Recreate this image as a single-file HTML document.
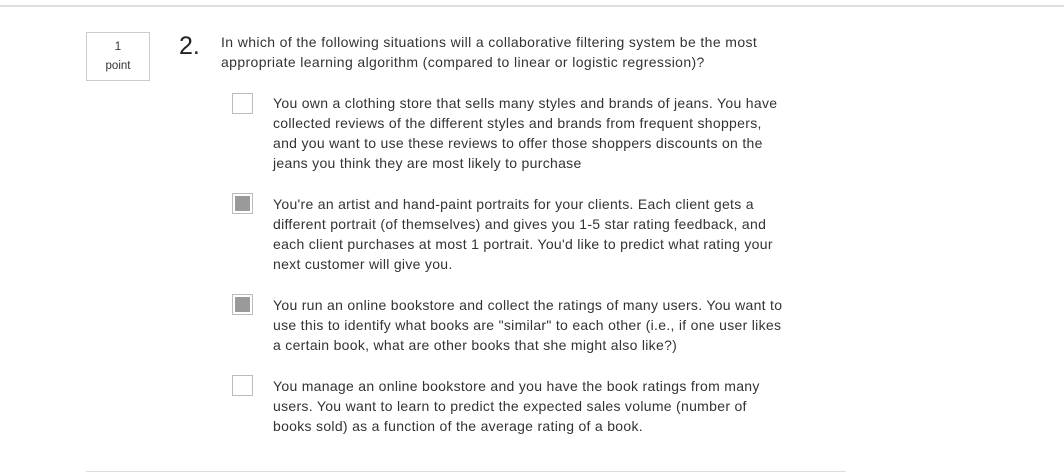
<!DOCTYPE html><html><head><style>
body{margin:0;width:1064px;height:474px;background:#fff;font-family:"Liberation Sans",sans-serif;color:#333;position:relative;overflow:hidden}
.top{position:absolute;left:0;top:5px;width:1064px;height:2px;background:#e0e0e0}
.bot{position:absolute;left:86px;top:471px;width:760px;height:1px;background:#ddd}
.pt{position:absolute;left:86px;top:32px;width:64px;height:49px;border:1px solid #ccc;font-size:11.5px;text-align:center;line-height:19px;box-sizing:border-box;padding-top:5px;color:#333}
.num{position:absolute;left:179px;top:32px;font-size:25px;color:#222}
.q{position:absolute;left:221px;top:32px;font-size:14px;line-height:20px;color:#333;white-space:nowrap;letter-spacing:0.38px}
.cb{position:absolute;left:232px;width:21px;height:21px;border:1px solid #bbb;background:#fff;box-sizing:border-box}
.cb.on::after{content:"";position:absolute;left:2px;top:2px;width:15px;height:15px;background:#9a9a9a}
.o{position:absolute;left:273px;font-size:14px;line-height:20px;color:#333;white-space:nowrap;letter-spacing:0.3px}
</style></head><body>
<div class="top"></div>
<div class="pt">1<br>point</div>
<div class="num">2.</div>
<div class="q">In which of the following situations will a collaborative filtering system be the most<br>appropriate learning algorithm (compared to linear or logistic regression)?</div>
<div class="cb" style="top:93px"></div>
<div class="o" style="top:93px">You own a clothing store that sells many styles and brands of jeans. You have<br>collected reviews of the different styles and brands from frequent shoppers,<br>and you want to use these reviews to offer those shoppers discounts on the<br>jeans you think they are most likely to purchase</div>
<div class="cb on" style="top:193px"></div>
<div class="o" style="top:194px">You're an artist and hand-paint portraits for your clients. Each client gets a<br>different portrait (of themselves) and gives you 1-5 star rating feedback, and<br>each client purchases at most 1 portrait. You'd like to predict what rating your<br>next customer will give you.</div>
<div class="cb on" style="top:294px"></div>
<div class="o" style="top:295px">You run an online bookstore and collect the ratings of many users. You want to<br>use this to identify what books are "similar" to each other (i.e., if one user likes<br>a certain book, what are other books that she might also like?)</div>
<div class="cb" style="top:375px"></div>
<div class="o" style="top:376px">You manage an online bookstore and you have the book ratings from many<br>users. You want to learn to predict the expected sales volume (number of<br>books sold) as a function of the average rating of a book.</div>
<div class="bot"></div>
</body></html>
